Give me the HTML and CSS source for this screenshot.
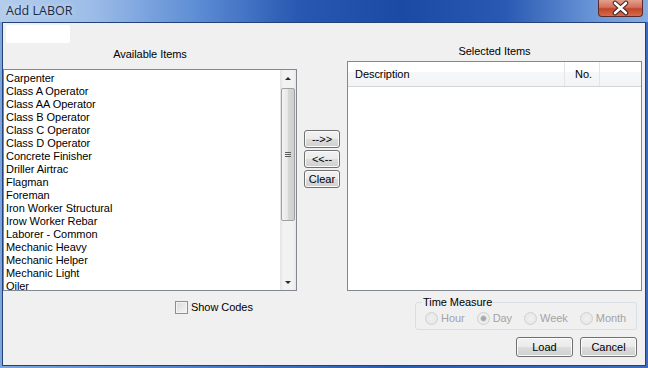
FILE: index.html
```html
<!DOCTYPE html>
<html lang="en">

<head>
    <meta charset="UTF-8">
    <meta name="viewport" content="width=device-width, initial-scale=1">
    <title>Add LABOR</title>
    <link rel="stylesheet" href="styles.css">
</head>

<body>
    <div class="window">
        <div class="titlebar">
            <span class="title">Add LABOR</span>
            <div class="close">
                <svg width="45" height="17" viewBox="0 0 45 17">
                    <path d="M17 4 L28 14 M28 4 L17 14" stroke="#3a2020" stroke-width="4.5" stroke-linecap="round" />
                    <path d="M17 4 L28 14 M28 4 L17 14" stroke="#fff" stroke-width="2.6" stroke-linecap="round" />
                </svg>
            </div>
        </div>

        <div class="client">
            <!-- left: available items -->
            <div class="col col-left">
                <div class="textbox"></div>
                <div class="caption">Available Items</div>
                <div class="listbox">
                    <ul class="items">
                        <li>Carpenter</li>
                        <li>Class A Operator</li>
                        <li>Class AA Operator</li>
                        <li>Class B Operator</li>
                        <li>Class C Operator</li>
                        <li>Class D Operator</li>
                        <li>Concrete Finisher</li>
                        <li>Driller Airtrac</li>
                        <li>Flagman</li>
                        <li>Foreman</li>
                        <li>Iron Worker Structural</li>
                        <li>Irow Worker Rebar</li>
                        <li>Laborer - Common</li>
                        <li>Mechanic Heavy</li>
                        <li>Mechanic Helper</li>
                        <li>Mechanic Light</li>
                        <li>Oiler</li>
                    </ul>
                    <div class="vscroll">
                        <div class="arrow arrow-up"></div>
                        <div class="track">
                            <div class="thumb"><span class="grip"></span></div>
                        </div>
                        <div class="arrow arrow-down"></div>
                    </div>
                </div>
                <label class="check"><span class="box"></span>Show Codes</label>
            </div>

            <!-- middle: move buttons -->
            <div class="col col-mid">
                <button class="btn">--&gt;&gt;</button>
                <button class="btn">&lt;&lt;--</button>
                <button class="btn">Clear</button>
            </div>

            <!-- right: selected items -->
            <div class="col col-right">
                <div class="caption">Selected Items</div>
                <div class="listview">
                    <div class="lv-head">
                        <div class="lv-col lv-desc">Description</div>
                        <div class="lv-col lv-no">No.</div>
                        <div class="lv-col lv-fill"></div>
                    </div>
                </div>
                <fieldset class="group">
                    <legend>Time Measure</legend>
                    <div class="radios">
                        <span class="radio"><span class="dot"></span>Hour</span>
                        <span class="radio checked"><span class="dot"></span>Day</span>
                        <span class="radio"><span class="dot"></span>Week</span>
                        <span class="radio"><span class="dot"></span>Month</span>
                    </div>
                </fieldset>
                <div class="actions">
                    <button class="btn btn-wide">Load</button>
                    <button class="btn btn-wide">Cancel</button>
                </div>
            </div>
        </div>
    </div>
</body>

</html>
```

FILE: styles.css
```css
body {
    margin: 0;
    font-family: "Liberation Sans", Arial, sans-serif;
    font-size: 11px;
    letter-spacing: -0.05px;
    color: #000;
    overflow: hidden;
}

.window {
    width: 648px;
    height: 368px;
    display: flex;
    flex-direction: column;
    background: linear-gradient(to right, #7ea6dc 0%, #4f80cc 30%, #2a5db5 60%, #3b6cc0 100%);
}

.titlebar {
    height: 22px;
    flex: none;
    display: flex;
    justify-content: space-between;
    align-items: flex-start;
    background: linear-gradient(to right, #b4cdec 0%, #9dbde8 14%, #5e8ed5 30%, #2858b1 46%, #1b4aa4 62%, #2959b2 78%, #6b97d8 92%, #86abe0 100%);
}

.title {
    font-family: "Open Sans", "DejaVu Sans", sans-serif;
    font-size: 12.5px;
    line-height: 16px;
    color: #1b2b44;
    padding: 3px 0 0 6px;
    letter-spacing: 0;
    text-shadow: 0 0 6px rgba(255, 255, 255, 0.6);
}

.close {
    width: 45px;
    height: 17px;
    margin-right: 5px;
    box-sizing: border-box;
    border: 1px solid #5b2a2a;
    border-top: none;
    border-radius: 0 0 4px 4px;
    background: linear-gradient(to bottom, #e3a08e 0%, #d2715a 45%, #c2442a 55%, #d86a4a 100%);
}

.close svg {
    display: block;
    margin: -1px 0 0 -1px;
}

.client {
    flex: 1;
    margin: 0 2px 2px;
    background-color: #f0f0f0;
    border: 1px solid #24427a;
    display: grid;
    grid-template-columns: 294px 36px 295px;
    column-gap: 7px;
    align-items: start;
}

.col {
    display: flex;
    flex-direction: column;
}

.caption {
    line-height: 13px;
    text-align: center;
}

/* left column */
.textbox {
    width: 64px;
    height: 18px;
    margin: 2px 0 0 3px;
    background-color: #fff;
    border-radius: 2px;
}

.col-left .caption {
    margin-top: 5px;
}

.listbox {
    margin-top: 8px;
    height: 222px;
    box-sizing: border-box;
    border: 1px solid #828790;
    background-color: #fff;
    display: flex;
}

.items {
    flex: 1;
    list-style: none;
    margin: 0;
    padding: 2px 0 0 2px;
    line-height: 13px;
    height: 218px;
}

.vscroll {
    width: 16px;
    display: flex;
    flex-direction: column;
    background: linear-gradient(to right, #e3e3e3 0%, #f2f2f2 20%, #f2f2f2 80%, #e8e8e8 100%);
}

.arrow {
    height: 17px;
    flex: none;
    position: relative;
}

.arrow::after {
    content: "";
    position: absolute;
    left: 5px;
    border-left: 3px solid transparent;
    border-right: 3px solid transparent;
}

.arrow-up::after {
    top: 7px;
    border-bottom: 3px solid #2a2a2a;
}

.arrow-down::after {
    top: 8px;
    border-top: 3px solid #2a2a2a;
}

.track {
    flex: 1;
    padding-top: 1px;
}

.thumb {
    height: 133px;
    margin: 0 1px;
    box-sizing: border-box;
    border: 1px solid #a0a0a0;
    border-radius: 2px;
    background: linear-gradient(to right, #f4f4f4 0%, #e8e8e8 45%, #d6d6d6 55%, #cfcfcf 100%);
    display: flex;
    align-items: center;
    justify-content: center;
}

.grip {
    width: 6px;
    height: 5px;
    background: repeating-linear-gradient(to bottom, #5e5e5e 0, #5e5e5e 1px, transparent 1px, transparent 2px);
}

.check {
    display: flex;
    align-items: center;
    margin-top: 10px;
    padding-left: 172px;
    line-height: 13px;
}

.box {
    width: 13px;
    height: 13px;
    box-sizing: border-box;
    margin-right: 3px;
    border: 1px solid #8e8f8f;
    background: linear-gradient(135deg, #dcdcdc 0%, #f4f4f4 100%);
    box-shadow: inset 0 0 0 1px #f4f4f4;
}

/* middle buttons */
.col-mid {
    padding-top: 107px;
    gap: 2px;
}

.btn {
    font-family: "Liberation Sans", Arial, sans-serif;
    font-size: 11px;
    height: 18px;
    padding: 0;
    color: #000;
    border: 1px solid #707070;
    border-radius: 3px;
    background: linear-gradient(to bottom, #f2f2f2 0%, #ebebeb 50%, #dddddd 50%, #cfcfcf 100%);
    box-shadow: inset 0 0 0 1px #fbfbfb;
}

/* right column */
.col-right .caption {
    margin-top: 22px;
}

.listview {
    margin-top: 3px;
    height: 230px;
    box-sizing: border-box;
    border: 1px solid #828790;
    background-color: #fff;
}

.lv-head {
    display: flex;
    height: 24px;
    background: linear-gradient(to bottom, #ffffff 0%, #ffffff 40%, #f6f7f8 41%, #f3f4f5 100%);
    border-bottom: 1px solid #d5d5d5;
}

.lv-col {
    display: flex;
    align-items: center;
    box-sizing: border-box;
    border-right: 1px solid #e3e5e7;
}

.lv-desc {
    width: 217px;
    padding-left: 7px;
}

.lv-no {
    width: 35px;
    justify-content: flex-end;
    padding-right: 7px;
}

.lv-fill {
    flex: 1;
    border-right: none;
}

.group {
    margin: 5px 0 0 68px;
    width: 222px;
    min-width: 0;
    box-sizing: border-box;
    padding: 0 6px 2px;
    border: 1px solid #d5dfe5;
    border-radius: 3px;
}

.group legend {
    padding: 0 1px;
    line-height: 13px;
}

.radios {
    display: flex;
    height: 18px;
    align-items: center;
    color: #a3a3a3;
}

.radio {
    display: flex;
    align-items: center;
    margin-right: 12px;
}

.radio:first-child {
    margin-left: 3px;
}

.radio:last-child {
    margin-right: 0;
}

.dot {
    width: 13px;
    height: 13px;
    box-sizing: border-box;
    margin-right: 3px;
    border: 1px solid #d0d0d0;
    border-radius: 50%;
    background: radial-gradient(circle, #f0f0f0 0%, #e4e4e4 100%);
}

.checked .dot {
    background: radial-gradient(circle, #9a9a9a 0, #b8b8b8 2.5px, #f0f0f0 3.5px, #e4e4e4 100%);
}

.actions {
    display: flex;
    justify-content: flex-end;
    gap: 7px;
    margin-top: 7px;
    padding-right: 5px;
}

.btn-wide {
    width: 57px;
    height: 20px;
}
```
